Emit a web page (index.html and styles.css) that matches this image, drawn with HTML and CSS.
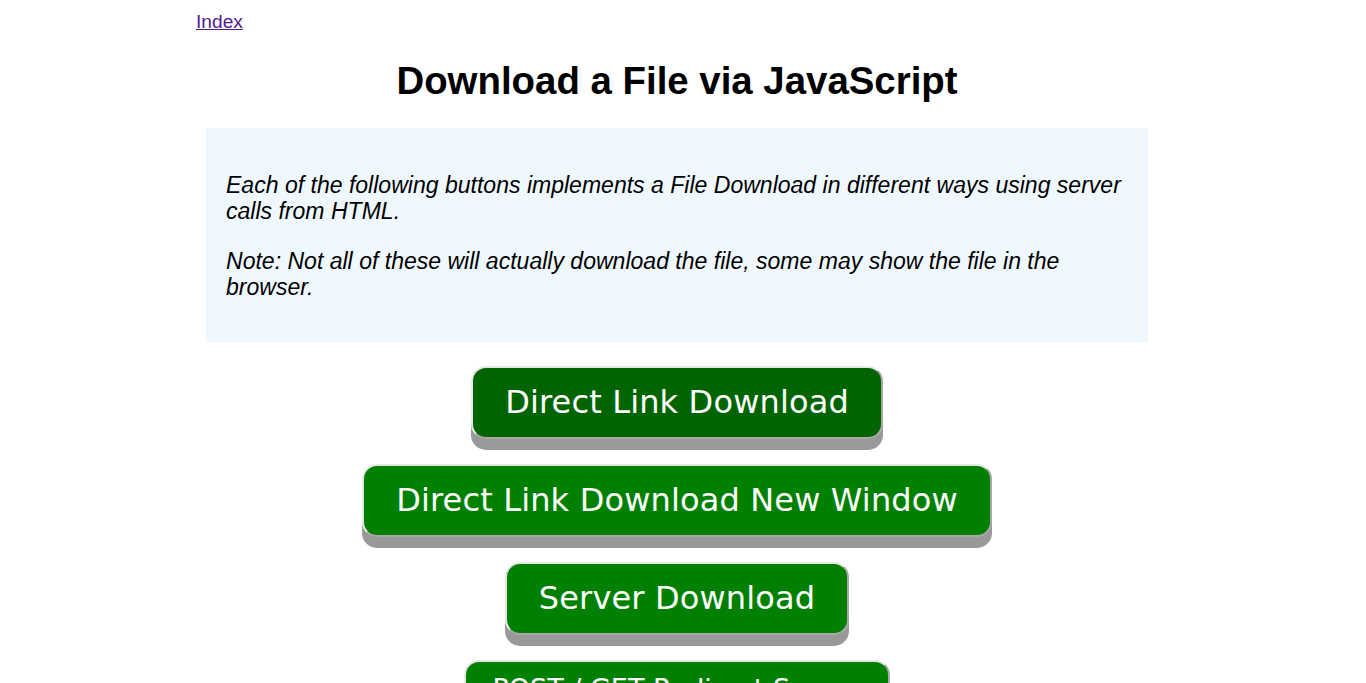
FILE: index.html
```html
<!DOCTYPE html>
<html>
<head>
<meta charset="utf-8">
<title>Download a File via JavaScript</title>
<link rel="stylesheet" href="styles.css">
</head>
<body>
<div class="page">
  <a class="index-link" href="#">Index</a>
  <h1 class="title">Download a File via JavaScript</h1>
  <div class="info">
    <p>Each of the following buttons implements a File Download in different ways using server calls from HTML.</p>
    <p>Note: Not all of these will actually download the file, some may show the file in the browser.</p>
  </div>
  <div class="buttons">
    <button class="btn btn-active">Direct Link Download</button>
    <button class="btn">Direct Link Download New Window</button>
    <button class="btn">Server Download</button>
    <button class="btn btn-form">POST / GET Redirect Server</button>
  </div>
</div>
</body>
</html>
```

FILE: styles.css
```css
html, body {
  margin: 0;
  padding: 0;
  background: #ffffff;
}
body {
  font-family: "Liberation Sans", Arial, sans-serif;
  font-size: 19.2px;
  color: #000;
}
.page {
  width: 962px;
  margin-left: 196px;
  padding-top: 11px;
}
.index-link {
  color: #551a8b;
  text-decoration: underline;
}
.title {
  font-size: 38.4px;
  font-weight: bold;
  text-align: center;
  margin: 26px 0 25px;
  line-height: 1.149;
}
.info {
  background: #f0f8ff;
  margin: 0 10px;
  padding: 20px 20px 19px;
}
.info p {
  font-size: 23.04px;
  font-style: italic;
  margin: 24px 0;
  line-height: 26px;
}
.info p:last-child {
  margin-bottom: 23px;
}
.buttons {
  display: flex;
  flex-direction: column;
  align-items: center;
  gap: 25px;
  margin-top: 24px;
}
.btn {
  font-family: "DejaVu Sans", sans-serif;
  font-size: 32px;
  letter-spacing: 0.15px;
  line-height: 37px;
  color: #ffffff;
  background: #008000;
  padding: 16px 32px;
  border: 2px solid;
  border-color: #e6e6e6 #a8a8a8 #a8a8a8 #e6e6e6;
  border-radius: 15px;
  box-shadow: 0 11px 0 #999999;
  cursor: pointer;
}
.btn-active {
  background: #006400;
}
.btn-form {
  font-size: 27px;
  letter-spacing: 0;
  line-height: 31px;
  padding: 11px 27px;
}
```
